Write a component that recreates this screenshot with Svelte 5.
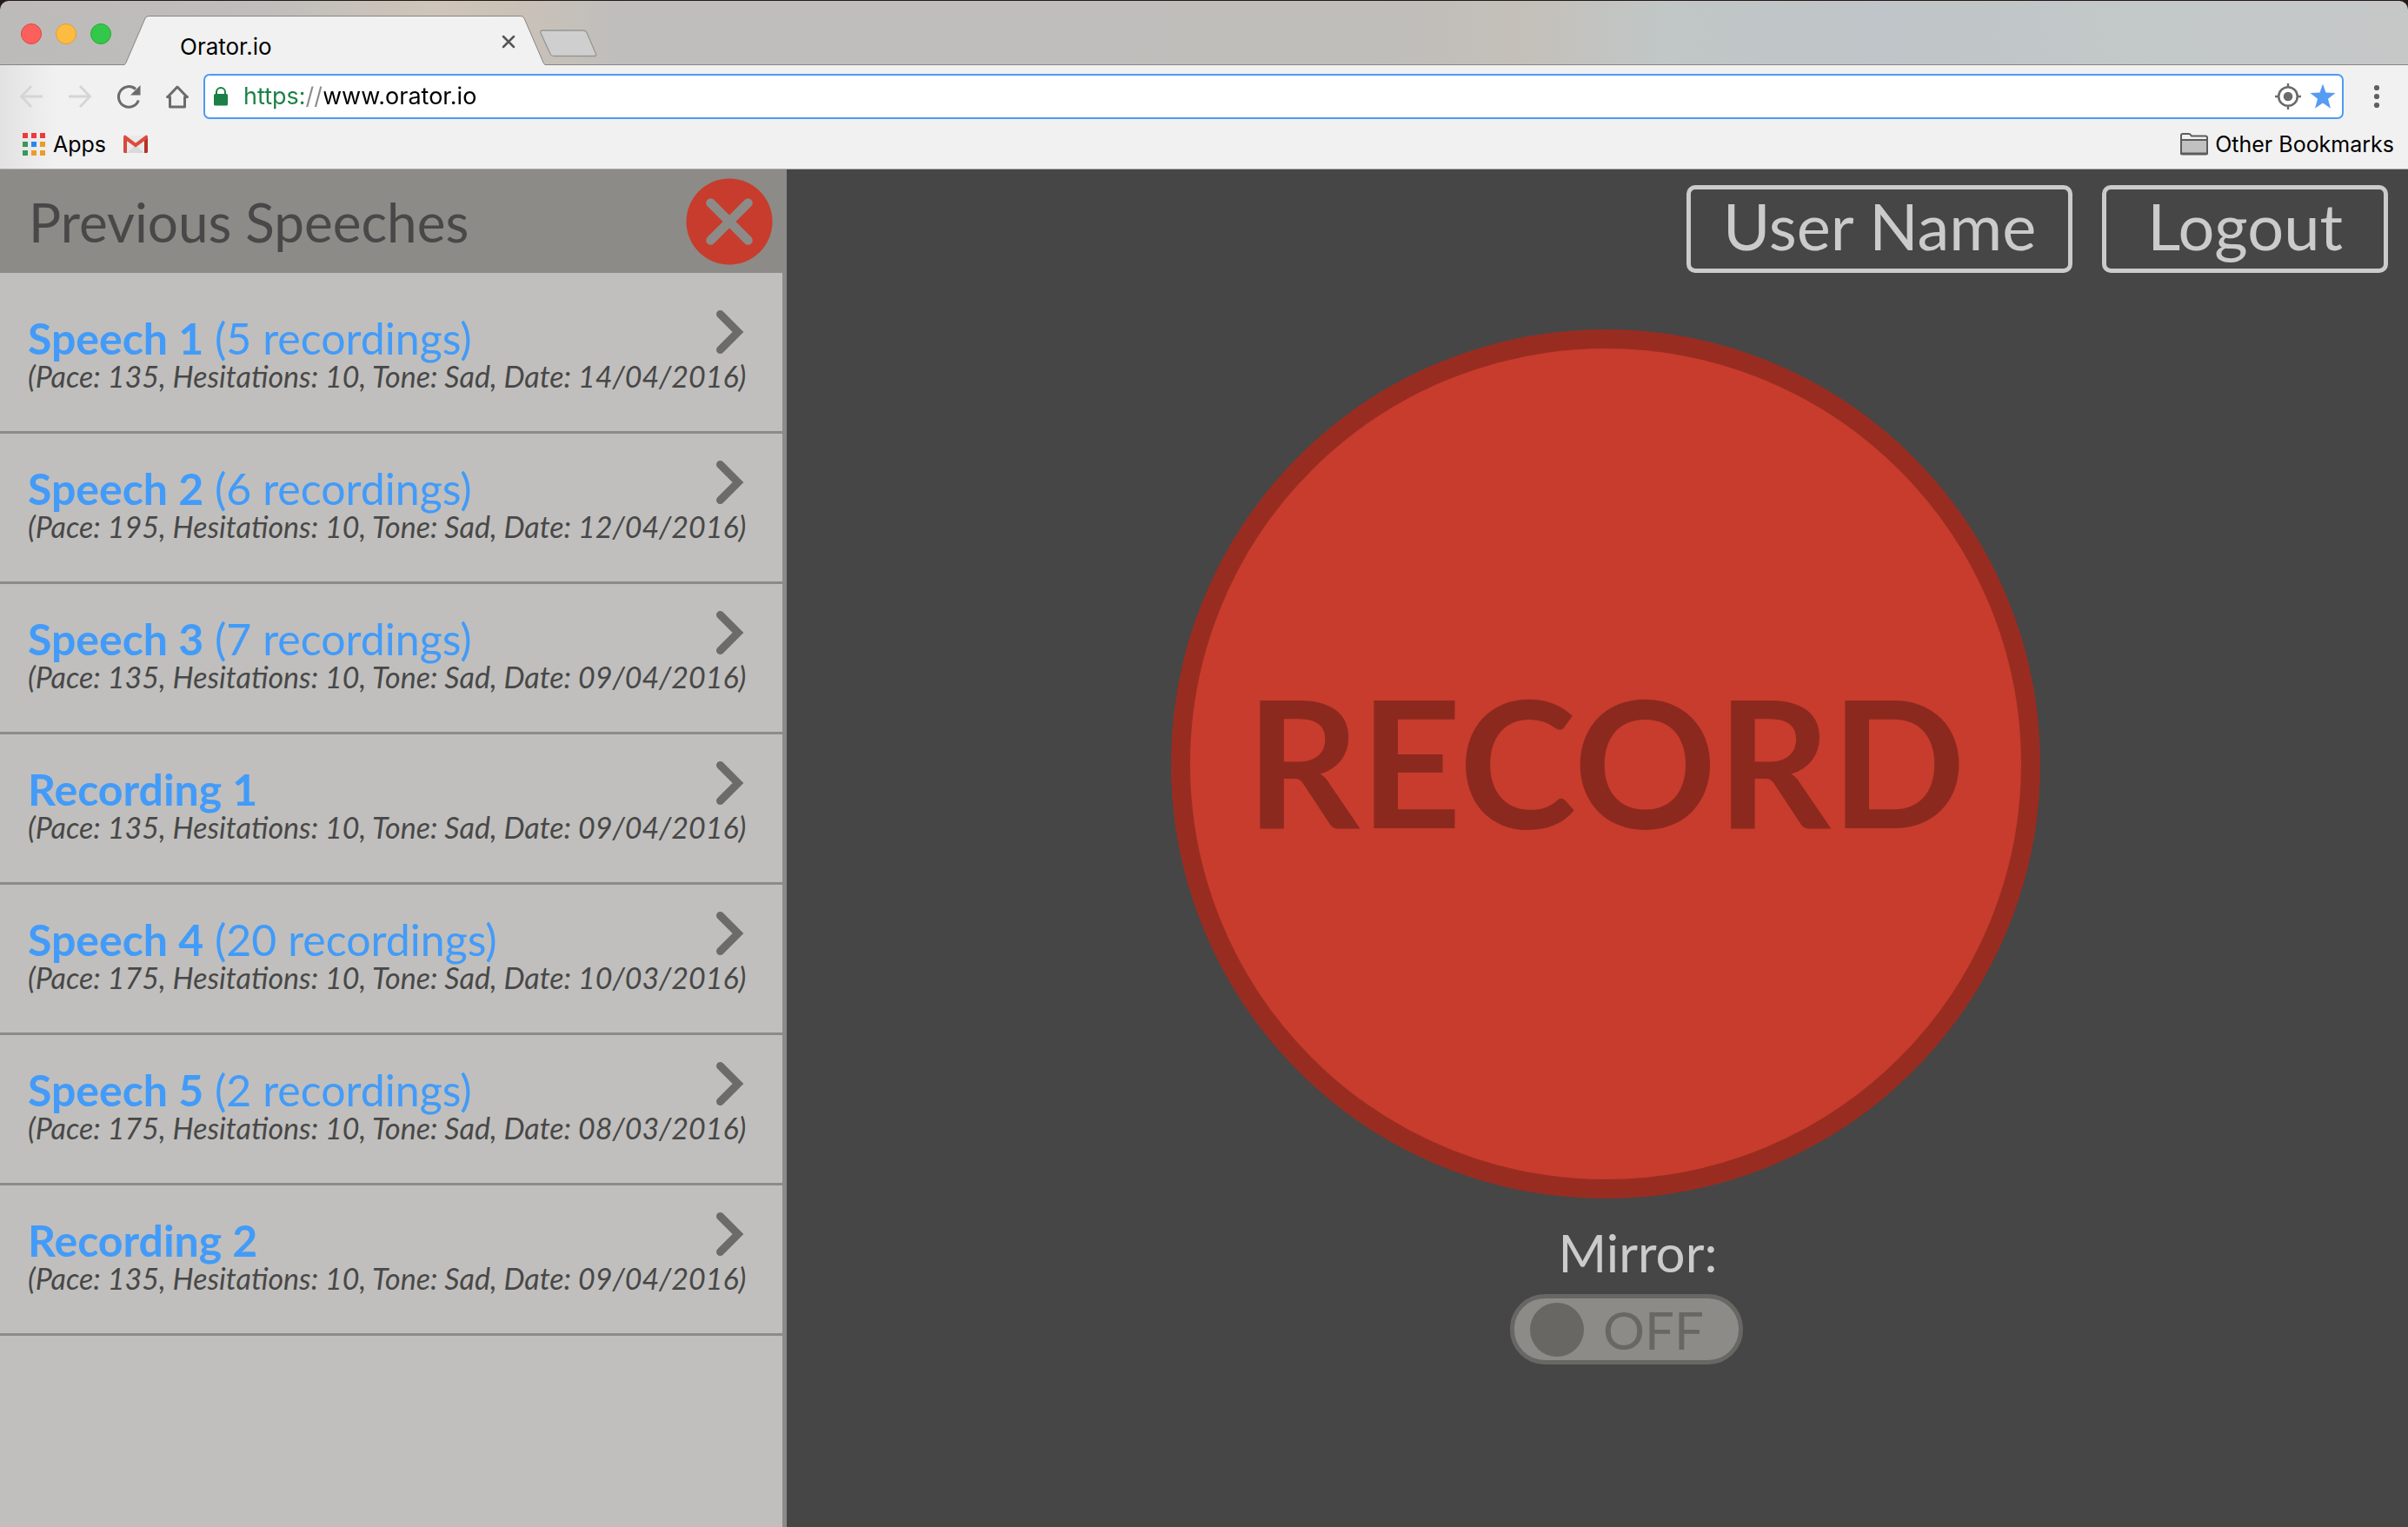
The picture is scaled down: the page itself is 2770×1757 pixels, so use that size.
<script>
  const speeches = [
    { title: 'Speech 1', count: 5, pace: 135, date: '14/04/2016' },
    { title: 'Speech 2', count: 6, pace: 195, date: '12/04/2016' },
    { title: 'Speech 3', count: 7, pace: 135, date: '09/04/2016' },
    { title: 'Recording 1', pace: 135, date: '09/04/2016' },
    { title: 'Speech 4', count: 20, pace: 175, date: '10/03/2016' },
    { title: 'Speech 5', count: 2, pace: 175, date: '08/03/2016' },
    { title: 'Recording 2', pace: 135, date: '09/04/2016' }
  ];
  const dots = [
    ['#ee3a3a', '#ee3a3a', '#ee3a3a'],
    ['#36985a', '#2a86ee', '#e99e27'],
    ['#36985a', '#e99e27', '#e99e27']
  ];
  let address = $state('https://www.orator.io');
  let mirror = $state(false);
</script>

<div class="window">
  <header class="chrome">
    <div class="tabs">
      <div class="lights">
        <button class="light red" aria-label="Close window"></button>
        <button class="light amber" aria-label="Minimise window"></button>
        <button class="light green" aria-label="Zoom window"></button>
      </div>
      <div class="tab">
        <svg width="28" height="57" viewBox="0 0 28 57" aria-hidden="true">
          <path d="M0 57V56.5Q1 56 2 54L24 3Q25.5 .5 28 .5V57Z" fill="#f1f1f1" />
          <path d="M0 56.5Q1 56 2 54L24 3Q25.5 .5 28 .5" fill="none" stroke="#868583" />
        </svg>
        <div class="tab-body">
          <span>Orator.io</span>
          <button class="icon" aria-label="Close tab">
            <svg width="16" height="16" viewBox="0 0 16 16"><path d="M2 2L14 14M14 2L2 14" stroke="#555" stroke-width="2.5" stroke-linecap="round" /></svg>
          </button>
        </div>
        <svg width="28" height="57" viewBox="0 0 28 57" aria-hidden="true">
          <path d="M28 57V56.5Q27 56 26 54L4 3Q2.5 .5 0 .5V57Z" fill="#f1f1f1" />
          <path d="M28 56.5Q27 56 26 54L4 3Q2.5 .5 0 .5" fill="none" stroke="#868583" />
        </svg>
      </div>
      <button class="icon new-tab" aria-label="New tab">
        <svg width="66" height="32" viewBox="0 0 66 32"><path d="M3 1H50Q52.5 1 54 3.5L64.5 28Q65 30.5 63 30.5H16Q13.5 30.5 12 28L.8 3.5Q.5 1 3 1Z" fill="#cfcfcf" stroke="#979694" stroke-width="1.3" /></svg>
      </button>
    </div>

    <div class="bars">
      <div class="toolbar">
        <button class="icon" aria-label="Back">
          <svg width="28" height="28" viewBox="0 0 28 28" fill="none" stroke="#d5d5d5" stroke-width="2.8"><path d="M14 2L2.5 14L14 26M2.5 14H27" /></svg>
        </button>
        <button class="icon" aria-label="Forward">
          <svg width="28" height="28" viewBox="0 0 28 28" fill="none" stroke="#d5d5d5" stroke-width="2.8"><path d="M14 2L25.5 14L14 26M25.5 14H1" /></svg>
        </button>
        <button class="icon" aria-label="Reload">
          <svg width="28" height="28" viewBox="0 0 28 28"><path d="M22 5.5A11.8 11.8 0 1 0 25.3 18.5" fill="none" stroke="#6b6b6b" stroke-width="3" /><path d="M27.5 1V12.5H16Z" fill="#6b6b6b" /></svg>
        </button>
        <button class="icon" aria-label="Home">
          <svg width="28" height="28" viewBox="0 0 28 28" fill="none" stroke="#6b6b6b" stroke-width="3"><path d="M2 15.5L14 3L26 15.5M1.5 14.5H5.5V26H22.5V14.5H26.5" stroke-linejoin="round" /></svg>
        </button>
        <div class="omnibox">
          <svg width="16" height="22" viewBox="0 0 16 22" aria-hidden="true"><rect y="8" width="16" height="13.5" rx="1.5" fill="#1a8045" /><path d="M3 9V6A5 5 0 0 1 13 6V9" fill="none" stroke="#1a8045" stroke-width="2" /></svg>
          <input type="text" aria-label="Address" bind:value={address} />
          <button class="icon" aria-label="Location">
            <svg width="30" height="30" viewBox="0 0 30 30"><circle cx="15" cy="15" r="10.8" fill="none" stroke="#6b6b6b" stroke-width="2.6" /><circle cx="15" cy="15" r="5.3" fill="#6b6b6b" /><path d="M15 0V4M15 26V30M0 15H4M26 15H30" stroke="#6b6b6b" stroke-width="2.4" /></svg>
          </button>
          <button class="icon" aria-label="Bookmark this page">
            <svg width="30" height="30" viewBox="0 0 30 30"><path d="M15 .5L18.5 10.5L29.5 11L21 17.8L24 28.8L15 22.6L6 28.8L9 17.8L.5 11L11.5 10.5Z" fill="#569cf3" /></svg>
          </button>
        </div>
        <button class="icon menu" aria-label="Menu">
          <svg width="8" height="28" viewBox="0 0 8 28" fill="#606060"><circle cx="4" cy="4" r="3.1" /><circle cx="4" cy="14" r="3.1" /><circle cx="4" cy="24" r="3.1" /></svg>
        </button>
      </div>

      <nav class="bookmarks" aria-label="Bookmarks">
        <a href="#apps">
          <svg width="26" height="26" viewBox="0 0 26 26" aria-hidden="true">
            {#each dots as row, y}
              {#each row as fill, x}
                <rect x={x * 10} y={y * 10} width="6" height="6" {fill} />
              {/each}
            {/each}
          </svg>
          Apps
        </a>
        <a href="#gmail" aria-label="Gmail">
          <svg width="28" height="22" viewBox="0 0 28 22" aria-hidden="true">
            <rect x="1" y="1" width="26" height="20" rx="1.5" fill="#e9e9e9" />
            <path d="M4 21L14 12L24 21Z" fill="#d9d9d9" />
            <path d="M0 3V19.5Q0 21 1.5 21H4V5.5Z" fill="#d54a3f" />
            <path d="M28 3V19.5Q28 21 26.5 21H24V5.5Z" fill="#b63227" />
            <path d="M0 2.5Q0 .5 2 .5L14 9.5L26 .5Q28 .5 28 2.5L27 5L14 14.5L1 5Z" fill="#dc4b3e" />
          </svg>
        </a>
        <a class="other" href="#other">
          <svg width="32" height="26" viewBox="0 0 32 26" aria-hidden="true"><path d="M1 23V3Q1 1 3 1H10Q11.5 1 13 3.5H29Q31 3.5 31 5.5V23Q31 24.5 29.5 24.5H2.5Q1 24.5 1 23Z" fill="#f1f1f1" stroke="#5c5c5c" stroke-width="2" /><path d="M1 8H31V23.5H1Z" fill="#c1c1c1" stroke="#5c5c5c" stroke-width="2" /></svg>
          Other Bookmarks
        </a>
      </nav>
    </div>
  </header>

  <div class="page">
    <aside>
      <div class="side-head">
        <h1>Previous Speeches</h1>
        <button class="icon" aria-label="Close previous speeches">
          <svg width="100" height="100" viewBox="0 0 100 100"><circle cx="50" cy="50" r="49.5" fill="#c73c2c" /><path d="M28.5 28.5L71.5 71.5M71.5 28.5L28.5 71.5" stroke="#8c8b88" stroke-width="10.5" stroke-linecap="round" /></svg>
        </button>
      </div>
      <ul>
        {#each speeches as s}
          <li>
            <a href="#speech">
              <span class="title"><strong>{s.title}</strong>{#if s.count}{' '}({s.count} recordings){/if}</span>
              <svg width="32" height="50" viewBox="0 0 32 50" aria-hidden="true"><path d="M4.5 4.5L25 25L4.5 45.5" fill="none" stroke="#6b6b6a" stroke-width="9" stroke-linecap="round" /></svg>
              <em>(Pace: {s.pace}, Hesitations: 10, Tone: Sad, Date: {s.date})</em>
            </a>
          </li>
        {/each}
      </ul>
    </aside>

    <main>
      <div class="account">
        <button>User Name</button>
        <button class="logout">Logout</button>
      </div>
      <button class="record">RECORD</button>
      <div class="mirror">
        <label for="mirror">Mirror:</label>
        <div class="switch">
          <input id="mirror" type="checkbox" bind:checked={mirror} />
          <span>{mirror ? 'ON' : 'OFF'}</span>
        </div>
      </div>
    </main>
  </div>
</div>

<style>
  :global(body) {
    margin: 0;
    background: #464646;
  }
  .window {
    display: flex;
    flex-direction: column;
    min-height: 100vh;
    font-family: Lato, "Open Sans", sans-serif;
  }
  button {
    margin: 0;
    font: inherit;
    cursor: pointer;
  }
  a {
    color: inherit;
    text-decoration: none;
  }
  svg {
    display: block;
    flex: none;
  }
  .icon {
    flex: none;
    padding: 0;
    border: 0;
    background: none;
  }

  .chrome {
    padding-top: 1px;
    border-bottom: 1px solid #aaa;
    background: #251a17;
    color: #000;
    font: 25px/32px Inter, sans-serif;
  }
  .tabs {
    display: flex;
    align-items: flex-end;
    box-sizing: border-box;
    height: 74px;
    padding-left: 24px;
    border-bottom: 1px solid #868583;
    border-radius: 10px 10px 0 0;
    background: linear-gradient(90deg, #bcbbb9, #bfbebc 11%, #cfc5b9 18%, #cbc2b7 21%, #bfbebc 26%, #bfbebb 57%, #c4bfb9 63%, #c1c7c6 69%, #bfc5c8 78%, #c3c8c8 90%, #c6c8c8);
  }
  .lights {
    display: flex;
    gap: 16px;
    padding: 0 15px 23px 0;
  }
  .light {
    box-sizing: border-box;
    width: 24px;
    height: 24px;
    padding: 0;
    border: 1px solid;
    border-radius: 50%;
  }
  .red {
    background: #fc605c;
    border-color: #e04642;
  }
  .amber {
    background: #fdbc40;
    border-color: #dfa030;
  }
  .green {
    background: #34c84a;
    border-color: #27a937;
  }
  .tab {
    display: flex;
    flex: 0 1 484px;
    margin-bottom: -1px;
  }
  .tab-body {
    display: flex;
    flex: 1;
    align-items: flex-end;
    justify-content: space-between;
    box-sizing: border-box;
    padding: 0 6px 5px 36px;
    border-top: 1px solid #868583;
    background: #f1f1f1;
    font-size: 26px;
  }
  .tab-body .icon {
    padding-bottom: 14px;
  }
  .new-tab {
    padding: 0 0 8px;
    margin-left: -6px;
  }

  .bars {
    background: linear-gradient(90deg, #e2e2e2, #f1f1f1 64px);
  }
  .toolbar {
    display: flex;
    align-items: center;
    gap: 28px;
    padding: 10px 32px 0 22px;
  }
  .omnibox {
    display: flex;
    flex: 1;
    align-items: center;
    gap: 10px;
    box-sizing: border-box;
    height: 52px;
    margin-left: -12px;
    padding: 0 7px 0 10px;
    border: 2px solid #4b9bf5;
    border-radius: 7px;
    background: #fff;
  }
  .omnibox input {
    flex: 1;
    min-width: 0;
    height: 44px;
    margin-left: 8px;
    padding: 0;
    border: 0;
    outline: 0;
    background: linear-gradient(90deg, #1a8045 69px, #8a8a8a 69px 93px, #000 93px);
    background-clip: text;
    color: transparent;
    font: 27px/44px Inter, sans-serif;
  }
  .menu {
    margin-left: 6px;
  }

  .bookmarks {
    display: flex;
    align-items: center;
    gap: 20px;
    height: 57px;
    padding: 0 16px 0 26px;
  }
  .bookmarks a {
    display: flex;
    align-items: center;
    gap: 9px;
  }
  .bookmarks .other {
    gap: 8px;
    margin-left: auto;
  }

  .page {
    display: flex;
    flex: 1;
  }
  aside {
    flex: 0 0 905px;
    box-sizing: border-box;
    border-right: 5px solid #8c8b88;
    background: #c0bfbd;
  }
  .side-head {
    display: flex;
    align-items: center;
    justify-content: space-between;
    height: 119px;
    padding: 0 11px 0 33px;
    background: #8c8b88;
    color: #484848;
  }
  h1 {
    margin: 0;
    font-size: 62px;
    font-weight: 400;
    line-height: 72px;
  }
  ul {
    margin: 0;
    padding: 12px 0 0;
    list-style: none;
  }
  li {
    box-sizing: border-box;
    height: 173px;
    border-bottom: 3px solid #8c8b88;
  }
  li a {
    display: grid;
    grid-template-columns: 1fr auto;
    padding: 31px 44px 0 32px;
    white-space: nowrap;
  }
  .title {
    padding-top: 6px;
    color: #429bf9;
    font-size: 50px;
    line-height: 52px;
  }
  strong {
    font-weight: 700;
  }
  em {
    grid-column: 1 / -1;
    color: #484848;
    font-size: 34px;
    line-height: 36px;
  }

  main {
    display: flex;
    flex: 1;
    flex-direction: column;
    align-items: center;
    padding: 18px 23px 0 42px;
    background: #464646;
    color: #cbcbcb;
  }
  .account {
    display: flex;
    gap: 34px;
    align-self: flex-end;
  }
  .account button {
    height: 101px;
    padding: 0 37px 8px;
    border: 5px solid #cbcbcb;
    border-radius: 10px;
    background: none;
    color: #cbcbcb;
    font-size: 74px;
    line-height: 82px;
  }
  .account .logout {
    padding: 0 47px 8px;
  }
  .record {
    box-sizing: border-box;
    width: 1000px;
    height: 1000px;
    margin-top: 65px;
    padding: 0 0 10px;
    border: 22px solid #992c21;
    border-radius: 50%;
    background: #c73c2c;
    color: #8c291f;
    font-size: 204px;
    font-weight: 700;
  }
  .mirror {
    display: flex;
    flex-direction: column;
    align-items: center;
    margin: 26px 0 0 48px;
  }
  label {
    padding-left: 26px;
    font-size: 60px;
    line-height: 72px;
  }
  .switch {
    display: flex;
    align-items: center;
    gap: 22px;
    box-sizing: border-box;
    width: 268px;
    height: 81px;
    margin-top: 12px;
    padding: 0 18px;
    border: 5px solid #686764;
    border-radius: 40px;
    background: #8c8b88;
    color: #686764;
    font-size: 60px;
    line-height: 72px;
  }
  .switch input {
    flex: none;
    width: 62px;
    height: 62px;
    margin: 0;
    appearance: none;
    border-radius: 50%;
    background: #686764;
  }
</style>
